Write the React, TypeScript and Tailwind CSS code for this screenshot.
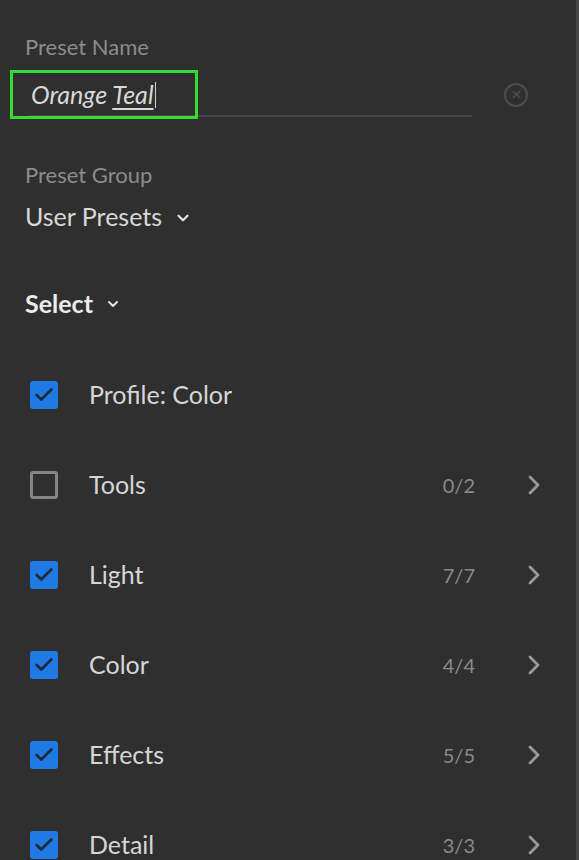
import { ChevronDown, Check } from 'lucide-react';

interface Row {
  label: string;
  checked: boolean;
  count?: string;
}

const rows: Row[] = [
  { label: 'Profile: Color', checked: true },
  { label: 'Tools', checked: false, count: '0/2' },
  { label: 'Light', checked: true, count: '7/7' },
  { label: 'Color', checked: true, count: '4/4' },
  { label: 'Effects', checked: true, count: '5/5' },
  { label: 'Detail', checked: true, count: '3/3' },
];

function Checkbox({ checked }: { checked: boolean }) {
  if (checked) {
    return (
      <div className="w-[28px] h-[28px] rounded-[3px] bg-[#1f7ae6] flex items-center justify-center shrink-0">
        <Check className="w-[22px] h-[22px] text-[#1d2a3a]" strokeWidth={3} />
      </div>
    );
  }
  return <div className="w-[28px] h-[28px] rounded-[3px] border-[3px] border-[#858585] shrink-0" />;
}

function Chevron() {
  return (
    <svg viewBox="0 0 12 20" className="w-[12px] h-[20px] shrink-0">
      <path d="M2 2L10 10L2 18" fill="none" stroke="#9a9a9a" strokeWidth="2.8" strokeLinecap="round" strokeLinejoin="round" />
    </svg>
  );
}

export default function App() {
  return (
    <div
      className="w-[579px] h-[860px] overflow-hidden bg-[#2f2f2f] border-r-[3px] border-[#474747] text-[#d6d6d6]"
      style={{ fontFamily: 'Lato, "Open Sans", sans-serif' }}
    >
      <div className="pl-[25px] pt-[32px] text-[22px] leading-[30px] text-[#8c8c8c]">Preset Name</div>

      <div className="flex items-center pl-[10px] pr-[48px] mt-[8px]">
        <div className="relative flex-1">
          <div className="absolute left-[18px] right-0 bottom-[2px] h-[2px] bg-[#474747]" />
          <div className="relative w-[188px] h-[49px] border-[3px] border-[#33dd33] flex items-center pl-[18px]">
            <span className="italic text-[25px] text-[#d8d8d8]">
              Orange <span className="underline underline-offset-[4px] decoration-[2px]">Teal</span>
            </span>
            <span className="w-[1px] h-[26px] bg-[#cfcfcf] ml-[1px]" />
          </div>
        </div>
        <div className="ml-[32px] w-[24px] h-[24px] rounded-full border-[2px] border-[#4d4d4d] flex items-center justify-center">
          <svg viewBox="0 0 10 10" className="w-[9px] h-[9px]">
            <path d="M1 1L9 9M9 1L1 9" stroke="#4d4d4d" strokeWidth="1.6" />
          </svg>
        </div>
      </div>

      <div className="pl-[25px] mt-[41px] text-[22px] leading-[30px] text-[#8c8c8c]">Preset Group</div>
      <div className="pl-[25px] mt-[10px] flex items-center gap-[12px] text-[25px] leading-[32px] text-[#d8d8d8]">
        User Presets
        <ChevronDown className="w-[18px] h-[18px] text-[#e0e0e0] mt-[4px]" strokeWidth={3} />
      </div>

      <div className="pl-[25px] mt-[55px] flex items-center gap-[12px] text-[25px] leading-[32px] font-bold text-[#ececec]">
        Select
        <ChevronDown className="w-[16px] h-[16px] text-[#e0e0e0] mt-[2px]" strokeWidth={3} />
      </div>

      <div className="mt-[31px] flex flex-col">
        {rows.map((r) => (
          <div key={r.label} className="h-[90px] flex items-center pl-[30px] pr-[36px]">
            <Checkbox checked={r.checked} />
            <span className="ml-[31px] flex-1 text-[25px] text-[#d6d6d6]">{r.label}</span>
            {r.count && (
              <>
                <span className="text-[20px] text-[#8a8a8a]">{r.count}</span>
                <span className="ml-[53px] flex">
                  <Chevron />
                </span>
              </>
            )}
          </div>
        ))}
      </div>
    </div>
  );
}
